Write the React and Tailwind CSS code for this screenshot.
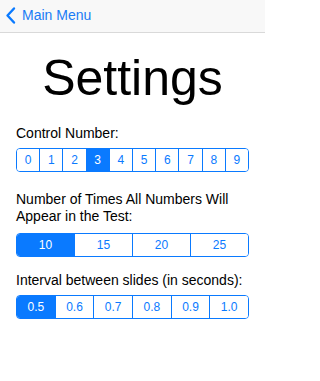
const blue = '#0a7aff'

const Segmented = ({ items, selected }) => (
  <div className="flex h-[24px] rounded-[4px] border border-[#0a7aff] overflow-hidden">
    {items.map((item, i) => (
      <div
        key={item}
        className={`flex-1 flex items-center justify-center text-[12px] ${
          i > 0 ? 'border-l border-[#0a7aff]' : ''
        } ${item === selected ? 'bg-[#0a7aff] text-white' : 'bg-white text-[#0a7aff]'}`}
      >
        {item}
      </div>
    ))}
  </div>
)

export default function App() {
  return (
    <div className="w-[265px] h-[381px] bg-white text-black" style={{ fontFamily: '"Liberation Sans", Arial, sans-serif' }}>
      {/* Nav bar */}
      <div className="h-[33px] bg-[#f8f8f8] border-b border-[#d9d9d9] flex items-center">
        <svg width="22" height="33" viewBox="0 0 22 33" className="shrink-0">
          <path d="M14 8.5 L7.5 15.5 L14 22.5" fill="none" stroke={blue} strokeWidth="2.4" strokeLinecap="round" strokeLinejoin="round" />
        </svg>
        <span className="text-[14px] text-[#1a7cf5] leading-none mb-[2px]">Main Menu</span>
      </div>

      {/* Title */}
      <h1 className="mt-[20px] text-center text-[50px] leading-[50px]">Settings</h1>

      <div className="px-[16px]">
        <p className="mt-[22px] text-[14px] leading-[17px]">Control Number:</p>
        <div className="mt-[6px]">
          <Segmented items={['0', '1', '2', '3', '4', '5', '6', '7', '8', '9']} selected="3" />
        </div>

        <p className="mt-[19px] text-[14px] leading-[17px]">
          Number of Times All Numbers Will Appear in the Test:
        </p>
        <div className="mt-[8px]">
          <Segmented items={['10', '15', '20', '25']} selected="10" />
        </div>

        <p className="mt-[15px] text-[14px] leading-[17px] whitespace-nowrap">Interval between slides (in seconds):</p>
        <div className="mt-[6px]">
          <Segmented items={['0.5', '0.6', '0.7', '0.8', '0.9', '1.0']} selected="0.5" />
        </div>
      </div>
    </div>
  )
}
